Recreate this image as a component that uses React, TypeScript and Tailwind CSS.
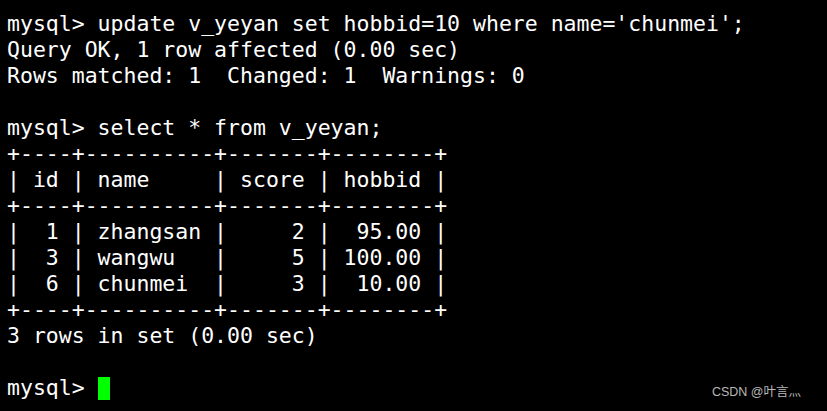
const lines = [
  "mysql> update v_yeyan set hobbid=10 where name='chunmei';",
  "Query OK, 1 row affected (0.00 sec)",
  "Rows matched: 1  Changed: 1  Warnings: 0",
  "",
  "mysql> select * from v_yeyan;",
  "+----+----------+-------+--------+",
  "| id | name     | score | hobbid |",
  "+----+----------+-------+--------+",
  "|  1 | zhangsan |     2 |  95.00 |",
  "|  3 | wangwu   |     5 | 100.00 |",
  "|  6 | chunmei  |     3 |  10.00 |",
  "+----+----------+-------+--------+",
  "3 rows in set (0.00 sec)",
  "",
];

export default function App() {
  return (
    <div className="relative w-[827px] h-[411px] overflow-hidden bg-black">
      <pre className="pl-[7px] pt-[11px] text-white font-['DejaVu_Sans_Mono',monospace] text-[21.5px] leading-[26px] whitespace-pre">
        {lines.map((l, i) => (
          <div key={i} className="h-[26px]">
            {l}
          </div>
        ))}
        <div className="flex h-[26px] items-center">
          <span>mysql&gt; </span>
          <span className="inline-block w-[12px] h-[23px] bg-[#00ff00]" />
        </div>
      </pre>
      <div className="absolute right-[26px] bottom-[9px] text-[12.5px] text-[#b8b8b8] font-['Liberation_Sans','Noto_Sans_CJK_SC',sans-serif]">
        CSDN @叶言灬
      </div>
    </div>
  );
}
